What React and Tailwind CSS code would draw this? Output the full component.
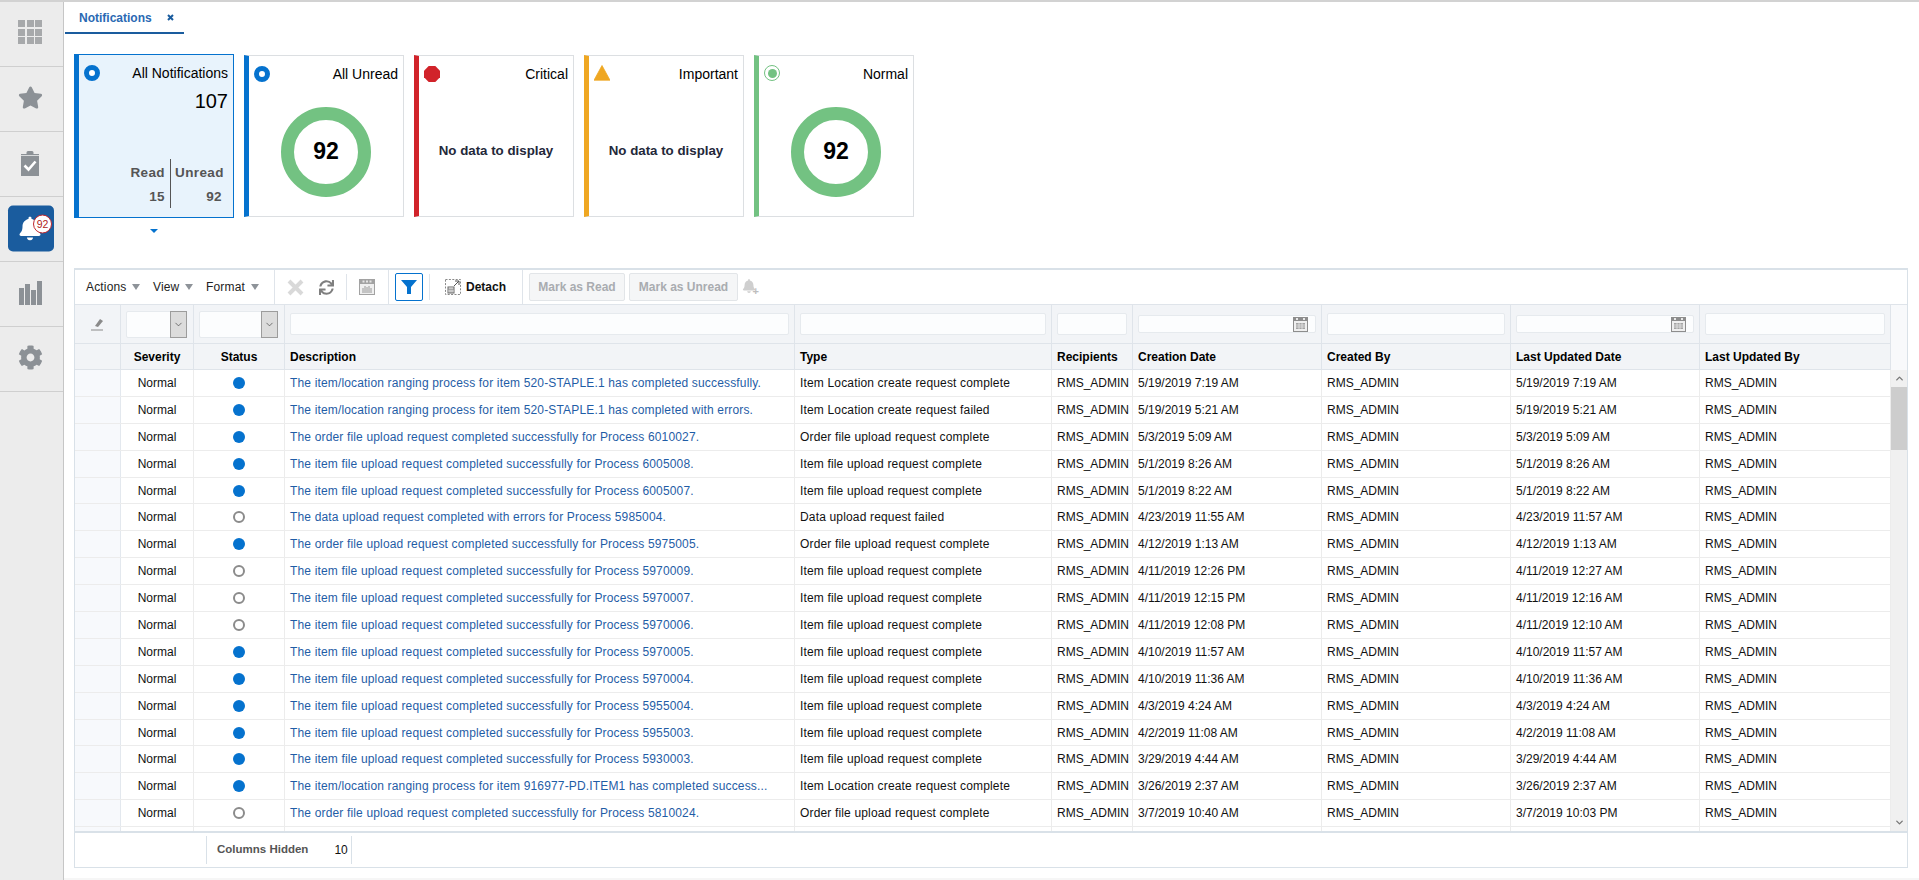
import React from "react";
import { FaStar, FaCog, FaBell, FaSync } from "react-icons/fa";
import { ChevronDown, ChevronUp } from "lucide-react";

const ITEM = (n) => `The item file upload request completed successfully for Process ${n}.`;
const ORDER = (n) => `The order file upload request completed successfully for Process ${n}.`;
const IF = "Item file upload request complete";
const OF = "Order file upload request complete";
const IL = "Item Location create request complete";

const rows = [
  ["The item/location ranging process for item 520-STAPLE.1 has completed successfully.", IL, "5/19/2019 7:19 AM", "5/19/2019 7:19 AM", 1],
  ["The item/location ranging process for item 520-STAPLE.1 has completed with errors.", "Item Location create request failed", "5/19/2019 5:21 AM", "5/19/2019 5:21 AM", 1],
  [ORDER(6010027), OF, "5/3/2019 5:09 AM", "5/3/2019 5:09 AM", 1],
  [ITEM(6005008), IF, "5/1/2019 8:26 AM", "5/1/2019 8:26 AM", 1],
  [ITEM(6005007), IF, "5/1/2019 8:22 AM", "5/1/2019 8:22 AM", 1],
  ["The data upload request completed with errors for Process 5985004.", "Data upload request failed", "4/23/2019 11:55 AM", "4/23/2019 11:57 AM", 0],
  [ORDER(5975005), OF, "4/12/2019 1:13 AM", "4/12/2019 1:13 AM", 1],
  [ITEM(5970009), IF, "4/11/2019 12:26 PM", "4/11/2019 12:27 AM", 0],
  [ITEM(5970007), IF, "4/11/2019 12:15 PM", "4/11/2019 12:16 AM", 0],
  [ITEM(5970006), IF, "4/11/2019 12:08 PM", "4/11/2019 12:10 AM", 0],
  [ITEM(5970005), IF, "4/10/2019 11:57 AM", "4/10/2019 11:57 AM", 1],
  [ITEM(5970004), IF, "4/10/2019 11:36 AM", "4/10/2019 11:36 AM", 1],
  [ITEM(5955004), IF, "4/3/2019 4:24 AM", "4/3/2019 4:24 AM", 1],
  [ITEM(5955003), IF, "4/2/2019 11:08 AM", "4/2/2019 11:08 AM", 1],
  [ITEM(5930003), IF, "3/29/2019 4:44 AM", "3/29/2019 4:44 AM", 1],
  ["The item/location ranging process for item 916977-PD.ITEM1 has completed success...", IL, "3/26/2019 2:37 AM", "3/26/2019 2:37 AM", 1],
  [ORDER(5810024), OF, "3/7/2019 10:40 AM", "3/7/2019 10:03 PM", 0],
];

const COLS = "grid grid-cols-[46px_73px_91px_510px_257px_81px_189px_189px_189px_191px]";
const HCELL = "border-r border-[#dfe4ea] flex items-center min-w-0";
const INPUT = "block h-[22px] w-full rounded-[2px] border border-[#e6eaee] bg-[#fcfdfe]";
const DATEINPUT = "flex h-[18px] w-full items-center justify-end rounded-[2px] border border-[#e6eaee] bg-[#fcfdfe]";

function Calendar() {
  return (
    <svg width="15" height="15" viewBox="0 0 15 15" className="mr-[7px] shrink-0">
      <rect x="0" y="0" width="15" height="15" fill="#8d8d8d" />
      <rect x="1" y="4" width="13" height="10" fill="#efefef" />
      <rect x="3" y="1" width="2" height="2" fill="#e8e8e8" />
      <rect x="10" y="1" width="2" height="2" fill="#e8e8e8" />
      <path d="M3 6h9v6H3z" fill="#a3a3a3" />
      <path d="M3 8h9M3 10h9M6 6v6M9 6v6" stroke="#efefef" strokeWidth="0.7" />
    </svg>
  );
}

function SelectBox({ w }) {
  return (
    <div className={`flex h-[27px] ${w} justify-end rounded-[2px] border border-[#e6eaee] bg-[#fcfdfe]`}>
      <div className="-my-px -mr-px flex h-[27px] w-[17px] items-center justify-center border border-[#9c9c9c] bg-[#dcdcdc]">
        <ChevronDown size={11} strokeWidth={1.5} color="#444" />
      </div>
    </div>
  );
}

function Caret() {
  return <span className="ml-[6px] inline-block h-0 w-0 border-x-[4.5px] border-t-[6px] border-x-transparent border-t-[#8e9399]" />;
}

function Sep({ mx = "" }) {
  return <div className={`h-[26px] w-px shrink-0 bg-[#dfe4ea] ${mx}`} />;
}

function Card({ color, title, selected, icon, children }) {
  return (
    <div
      className={
        selected
          ? "flex h-[164px] w-[160px] flex-col border border-l-[5px] border-[#0572ce] bg-[#e8f3fc]"
          : "flex h-[162px] w-[160px] flex-col border border-l-[5px] border-[#dcdfe2] bg-white"
      }
      style={{ borderLeftColor: color }}
    >
      <div className="flex h-[31px] shrink-0 items-start justify-between px-[5px] pt-[10px]">
        {icon}
        <span className="-mt-[1px] text-[14px] leading-[18px] text-black">{title}</span>
      </div>
      {children}
    </div>
  );
}

function Donut() {
  return (
    <div className="flex flex-1 items-center justify-center">
      <div className="flex h-[90px] w-[90px] items-center justify-center rounded-full border-[13px] border-[#73c282] text-[23px] font-bold text-black">92</div>
    </div>
  );
}

function NoData() {
  return (
    <div className="flex flex-1 items-center justify-center pb-[1px] text-[13.3px] font-bold text-[#24283a]">No data to display</div>
  );
}

const RING = <span className="block h-[16px] w-[16px] rounded-full border-[5px] border-[#0572ce] bg-white" />;

function SideItem({ children }) {
  return <div className="flex h-[65px] shrink-0 items-center justify-center border-b border-[#cfcfcf] pr-[3px]">{children}</div>;
}

export default function App() {
  return (
    <div className="flex h-[880px] w-[1919px] overflow-hidden border-t-2 border-[#d2d2d2] bg-white font-['Liberation_Sans',Arial,sans-serif] text-[12px] text-[#111]">
      {/* Sidebar */}
      <div className="flex w-[64px] shrink-0 flex-col border-r border-[#c6c6c6] bg-[#ececec]">
        <div className="flex h-[65px] shrink-0 items-center justify-center border-b border-[#cfcfcf] pb-[4px] pr-[3px]">
          <div className="grid grid-cols-3 gap-[1.5px]">
            {Array.from({ length: 9 }).map((_, i) => (
              <span key={i} className="block h-[7px] w-[7px] bg-[#a7a9ab]" />
            ))}
          </div>
        </div>
        <SideItem><FaStar size={25} color="#8c9196" className="-mt-[3px]" /></SideItem>
        <SideItem>
          <svg width="18" height="25" viewBox="0 0 18 25" className="-mt-[1px]">
            <path d="M0 3h5.5V1.5a1.5 1.5 0 0 1 1.5-1.5h4a1.5 1.5 0 0 1 1.5 1.5V3H18v22H0z" fill="#8c9196" />
            <path d="M0 4.5h18" stroke="#ececec" strokeWidth="0.8" />
            <path d="M3.5 14.5l4 4 7-8" stroke="#fff" strokeWidth="2.6" fill="none" />
          </svg>
        </SideItem>
        <SideItem>
          <div className="relative ml-[2px] flex h-[46px] w-[46px] -translate-y-[0.5px] items-center justify-center rounded-[5px] bg-[#1a5c9e]">
            <FaBell size={24} color="#fff" className="-ml-[2px]" />
            <span className="absolute left-[25px] top-[9px] flex h-[19px] w-[19px] items-center justify-center rounded-full border-[1.5px] border-[#c0272d] bg-white text-[10.5px] leading-none text-[#b01c22]">92</span>
          </div>
        </SideItem>
        <SideItem>
          <svg width="23" height="24" viewBox="0 0 23 24" className="-mt-[3px]">
            <rect x="0" y="7" width="5" height="17" fill="#8c9196" />
            <rect x="6" y="3" width="5" height="21" fill="#8c9196" />
            <rect x="12" y="9" width="5" height="15" fill="#8c9196" />
            <rect x="18" y="0" width="5" height="24" fill="#8c9196" />
          </svg>
        </SideItem>
        <SideItem><FaCog size={25} color="#8c9196" className="-mt-[3px]" /></SideItem>
      </div>

      {/* Main */}
      <div className="flex min-w-0 flex-1 flex-col">
        <div className="flex h-[32px] shrink-0 pl-[1px]">
          <div className="flex h-[32px] w-[119px] items-center border-b-2 border-[#1a5c9e] pl-[14px] pr-[9px] pt-[1px]">
            <span className="font-bold text-[#2a69b3]">Notifications</span>
            <svg width="7" height="7" viewBox="0 0 7 7" className="ml-auto mr-[1px]">
              <path d="M1 1l5 5M6 1L1 6" stroke="#1a5c9e" strokeWidth="2" />
            </svg>
          </div>
        </div>

        <div className="mt-[20px] flex h-[164px] shrink-0 items-center gap-[10px] pl-[10px]">
          <Card color="#0572ce" title="All Notifications" selected icon={RING}>
            <div className="mt-[3px] pr-[5px] text-right text-[20px] leading-[24px] text-black">107</div>
            <div className="mb-[9px] mt-auto flex h-[49px] text-[13.5px] font-bold tracking-[0.4px] text-[#555]">
              <div className="flex flex-1 flex-col items-end justify-between pb-[3px] pr-[5px] pt-[6px]">
                <span className="leading-[16px]">Read</span>
                <span className="leading-[16px]">15</span>
              </div>
              <div className="w-px bg-[#555]" />
              <div className="flex w-[62px] flex-col justify-between pb-[3px] pl-[4px] pt-[6px]">
                <span className="leading-[16px]">Unread</span>
                <span className="pr-[11px] text-right leading-[16px]">92</span>
              </div>
            </div>
          </Card>
          <Card color="#0572ce" title="All Unread" icon={RING}><Donut /></Card>
          <Card
            color="#d1232a"
            title="Critical"
            icon={
              <svg width="16" height="16" viewBox="0 0 16 16">
                <polygon points="4.7,0 11.3,0 16,4.7 16,11.3 11.3,16 4.7,16 0,11.3 0,4.7" fill="#d1232a" />
              </svg>
            }
          >
            <NoData />
          </Card>
          <Card
            color="#efa722"
            title="Important"
            icon={
              <svg width="16" height="16" viewBox="0 0 16 16" className="-mt-[1px]">
                <path d="M8 0.5L16 15.2H0z" fill="#efa722" stroke="#efa722" strokeWidth="0.8" strokeLinejoin="round" />
              </svg>
            }
          >
            <NoData />
          </Card>
          <Card
            color="#73c282"
            title="Normal"
            icon={
              <span className="-mt-[1px] flex h-[16px] w-[16px] items-center justify-center rounded-full border-[1.5px] border-[#73c282] bg-white">
                <span className="block h-[9px] w-[9px] rounded-full bg-[#73c282]" />
              </span>
            }
          >
            <Donut />
          </Card>
        </div>

        <div className="mt-[11px] flex h-[39px] shrink-0 items-start pl-[86px]">
          <span className="block h-0 w-0 border-x-[4px] border-t-[4px] border-x-transparent border-t-[#0572ce]" />
        </div>

        {/* Table panel */}
        <div className="ml-[10px] flex h-[600px] w-[1834px] shrink-0 flex-col border border-t-2 border-[#d9e1e8]">
          {/* Toolbar */}
          <div className="flex h-[35px] shrink-0 items-center border-b border-[#dfe4ea] text-[12px]">
            <div className="flex h-[34px] w-[200px] shrink-0 items-center border-r border-[#dfe4ea] pb-px pl-[11px] tracking-[0.16px] text-[#222]">
              <span className="flex w-[67px] items-center">Actions<Caret /></span>
              <span className="flex w-[53px] items-center">View<Caret /></span>
              <span className="flex items-center">Format<Caret /></span>
            </div>
            <div className="flex h-[34px] w-[114px] shrink-0 items-center border-r border-[#dfe4ea]">
              <svg width="17" height="17" viewBox="0 0 17 17" className="ml-[12px]">
                <path d="M2 2l13 13M15 2L2 15" stroke="#d9d9d9" strokeWidth="4" />
              </svg>
              <FaSync size={15} color="#7f7f7f" className="ml-[15px]" />
              <Sep mx="ml-[12px]" />
              <svg width="16" height="16" viewBox="0 0 16 16" className="ml-[12px]">
                <rect width="16" height="16" fill="#a2a2a2" />
                <rect x="1" y="5" width="14" height="10" fill="#efefef" />
                <path d="M3.5 1.5h2v2h-2zM7 1.5h2v2H7zM10.5 1.5h2v2h-2z" fill="#e4e4e4" />
                <path d="M4 9v5M6 7v7M8 8v6M10 7v7M12 9v5" stroke="#989898" />
              </svg>
            </div>
            <div className="ml-[6px] flex h-[28px] w-[28px] shrink-0 items-center justify-center rounded-[2px] border border-[#0572ce]">
              <svg width="16" height="16" viewBox="0 0 16 16">
                <path d="M0 1h16L10 8v7H6V8z" fill="#0572ce" />
              </svg>
            </div>
            <Sep mx="ml-[6px]" />
            <div className="flex h-[34px] w-[93px] shrink-0 items-center border-r border-[#dfe4ea]">
              <svg width="16" height="16" viewBox="0 0 16 16" className="ml-[15px]">
                <rect x="0.5" y="0.5" width="15" height="15" fill="none" stroke="#888" strokeDasharray="2 1.4" />
                <path d="M9 7l5-5M10 2h4v4" stroke="#555" fill="none" />
                <rect x="3" y="8" width="6" height="6" fill="none" stroke="#666" />
                <path d="M3 10h6M5 10v4M7 10v4" stroke="#666" strokeWidth="0.7" />
              </svg>
              <span className="ml-[5px] font-bold text-[#111]">Detach</span>
            </div>
            <div className="ml-[6px] flex h-[28px] w-[96px] shrink-0 items-center justify-center rounded-[2px] border border-[#e2e5e8] bg-[#f5f6f7] font-bold text-[#a9acb0]">Mark as Read</div>
            <div className="ml-[4px] flex h-[28px] w-[109px] shrink-0 items-center justify-center rounded-[2px] border border-[#e2e5e8] bg-[#f5f6f7] font-bold text-[#a9acb0]">Mark as Unread</div>
            <div className="relative ml-[4px] h-[16px] w-[16px] shrink-0">
              <FaBell size={14} color="#cfcfcf" />
              <span className="absolute -bottom-[2px] -right-[1px] text-[11px] font-bold leading-none text-[#bdbdbd]">+</span>
            </div>
          </div>

          {/* Filter + header */}
          <div className="flex shrink-0 bg-[#f2f4f7]">
            <div className="w-[1816px] shrink-0">
              <div className={`${COLS} h-[39px] border-b border-[#dfe4ea]`}>
                <div className={`${HCELL} justify-center`}>
                  <svg width="13" height="14" viewBox="0 0 13 14">
                    <path d="M4 9l5-7 3 2-5 6z" fill="#8a8a8a" />
                    <path d="M0 13h12" stroke="#8a8a8a" />
                  </svg>
                </div>
                <div className={`${HCELL} px-[5px]`}><SelectBox w="w-[61px]" /></div>
                <div className={`${HCELL} px-[5px]`}><SelectBox w="w-[79px]" /></div>
                <div className={`${HCELL} px-[5px]`}><span className={INPUT} /></div>
                <div className={`${HCELL} px-[5px]`}><span className={INPUT} /></div>
                <div className={`${HCELL} px-[5px]`}><span className={INPUT} /></div>
                <div className={`${HCELL} px-[5px]`}><span className={DATEINPUT}><Calendar /></span></div>
                <div className={`${HCELL} px-[5px]`}><span className={INPUT} /></div>
                <div className={`${HCELL} px-[5px]`}><span className={DATEINPUT}><Calendar /></span></div>
                <div className={`${HCELL} px-[5px]`}><span className={INPUT} /></div>
              </div>
              <div className={`${COLS} h-[26px] border-b border-[#dfe4ea] font-bold text-black`}>
                <div className={HCELL} />
                <div className={`${HCELL} justify-center`}>Severity</div>
                <div className={`${HCELL} justify-center`}>Status</div>
                <div className={`${HCELL} pl-[5px]`}>Description</div>
                <div className={`${HCELL} pl-[5px]`}>Type</div>
                <div className={`${HCELL} pl-[5px]`}>Recipients</div>
                <div className={`${HCELL} pl-[5px]`}>Creation Date</div>
                <div className={`${HCELL} pl-[5px]`}>Created By</div>
                <div className={`${HCELL} pl-[5px]`}>Last Updated Date</div>
                <div className={`${HCELL} pl-[5px]`}>Last Updated By</div>
              </div>
            </div>
            <div className="flex-1 bg-[#f8f9fb]" />
          </div>

          {/* Body */}
          <div className="flex h-[463px] shrink-0 border-b-2 border-[#d9e1e8]">
            <div className="w-[1816px] shrink-0 overflow-hidden">
              {rows.concat([null]).map((r, i) => (
                <div key={i} className={`${COLS} h-[26.9px] border-b border-[#ececec] text-[#111]`}>
                  <div className="border-r border-[#e3e8ee] bg-[#f7f9fc]" />
                  <div className="flex items-center justify-center border-r border-[#ececec]">{r && "Normal"}</div>
                  <div className="flex items-center justify-center border-r border-[#ececec]">
                    {r && (r[4] ? (
                      <span className="block h-[12px] w-[12px] rounded-full bg-[#0572ce]" />
                    ) : (
                      <span className="block h-[12px] w-[12px] rounded-full border-2 border-[#8b8b8b]" />
                    ))}
                  </div>
                  <div className="flex items-center overflow-hidden whitespace-nowrap border-r border-[#ececec] pl-[5px] tracking-[0.16px] text-[#1f5da6]">{r && r[0]}</div>
                  <div className="flex items-center border-r border-[#ececec] pl-[5px] tracking-[0.16px]">{r && r[1]}</div>
                  <div className="flex items-center border-r border-[#ececec] pl-[5px]">{r && "RMS_ADMIN"}</div>
                  <div className="flex items-center border-r border-[#ececec] pl-[5px]">{r && r[2]}</div>
                  <div className="flex items-center border-r border-[#ececec] pl-[5px]">{r && "RMS_ADMIN"}</div>
                  <div className="flex items-center border-r border-[#ececec] pl-[5px]">{r && r[3]}</div>
                  <div className="flex items-center border-r border-[#ececec] pl-[5px]">{r && "RMS_ADMIN"}</div>
                </div>
              ))}
            </div>
            <div className="flex flex-1 flex-col bg-[#f0f0f0]">
              <div className="flex h-[17px] items-center justify-center"><ChevronUp size={11} strokeWidth={3} color="#777" /></div>
              <div className="h-[63px] bg-[#cdcdcd]" />
              <div className="flex-1" />
              <div className="flex h-[17px] items-center justify-center"><ChevronDown size={11} strokeWidth={3} color="#777" /></div>
            </div>
          </div>

          {/* Footer */}
          <div className="flex flex-1 items-center pl-[131px]">
            <div className="flex h-[28px] w-[146px] items-center whitespace-nowrap border-x border-[#d9e1e8]">
              <span className="ml-[10px] text-[11.5px] font-bold text-[#555]">Columns Hidden</span>
              <span className="ml-[26px] text-[#111]">10</span>
            </div>
          </div>
        </div>
        <div className="mt-[10px] h-[2px] bg-[#f6f6f6]" />
      </div>
    </div>
  );
}
